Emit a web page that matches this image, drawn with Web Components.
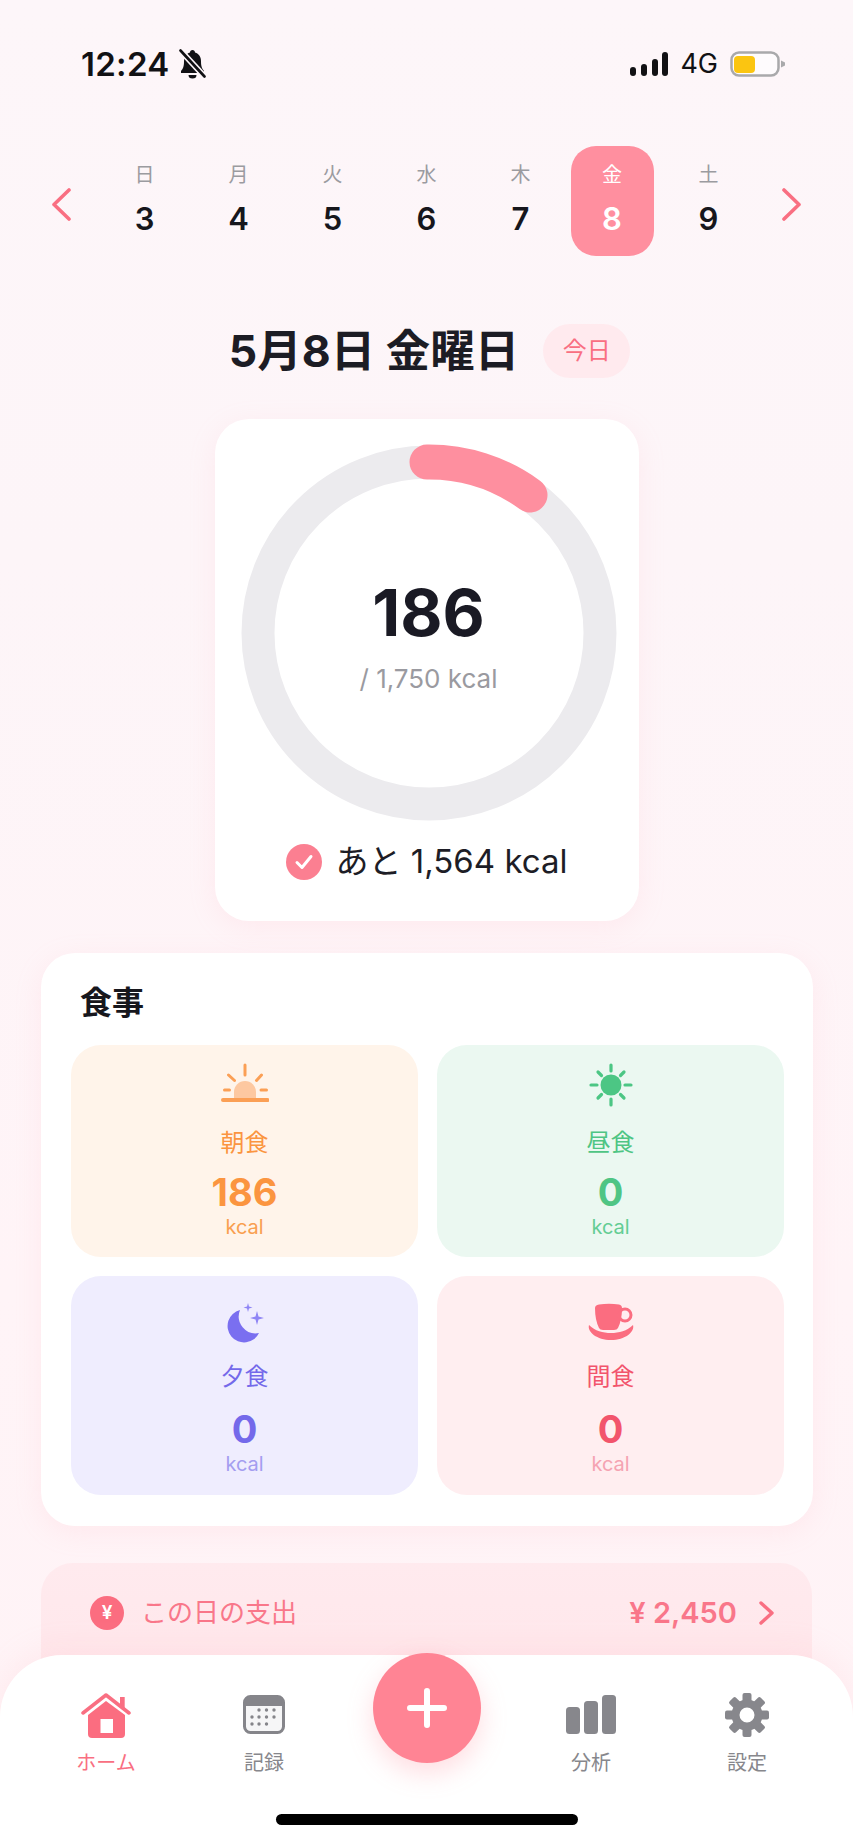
<!DOCTYPE html>
<html lang="ja">
<head>
<meta charset="utf-8">
<title>食事</title>
<style>
  html, body { margin: 0; padding: 0; }
  body { font-family: Inter, "Noto Sans CJK JP", sans-serif; background: #fdf5f8; }
</style>
</head>
<body>
<app-shell>
  <status-bar></status-bar>
  <week-strip>
    <day-cell label="日" num="3"></day-cell>
    <day-cell label="月" num="4"></day-cell>
    <day-cell label="火" num="5"></day-cell>
    <day-cell label="水" num="6"></day-cell>
    <day-cell label="木" num="7"></day-cell>
    <day-cell label="金" num="8" selected></day-cell>
    <day-cell label="土" num="9"></day-cell>
  </week-strip>
  <date-heading title="5月8日 金曜日" badge="今日"></date-heading>
  <calorie-ring value="186" goal="/ 1,750 kcal" rest="あと 1,564 kcal"></calorie-ring>
  <meal-panel heading="食事">
    <meal-tile kind="morning" label="朝食" value="186">
      <svg slot="icon" width="48" height="44" viewBox="0 0 48 44" fill="none" stroke="#fb9f55" stroke-width="3" stroke-linecap="round">
        <path d="M24 2v10M7.5 12l6 5.500M40.500 12l-5 5.500M3.500 27h5M40 27h5.500"/>
        <path d="M13 35v-6a11 11 0 0 1 22 0v6z" fill="#fdc8a0" stroke="none"/>
        <path d="M2 37h44.500" stroke-width="4"/>
      </svg>
    </meal-tile>
    <meal-tile kind="noon" label="昼食" value="0">
      <svg slot="icon" width="44" height="44" viewBox="0 0 44 44" fill="none" stroke="#4cc684" stroke-width="3.200" stroke-linecap="round">
        <circle cx="22" cy="22" r="10.500" fill="#4cc684" stroke="none"/>
        <path d="M22 2v6M22 36v6M2 22h6M36 22h6M9 9l3.500 3.500M35 9l-3.500 3.500M9 35l3.500-3.500M35 35l-3.500-3.500"/>
      </svg>
    </meal-tile>
    <meal-tile kind="night" label="夕食" value="0">
      <svg slot="icon" width="40" height="44" viewBox="0 0 40 44" fill="#7a6ff0">
        <path d="M15 10A16.500 16.500 0 1 0 34 33A17 17 0 0 1 15 10Z"/>
        <path fill="#8f85f5" d="M32 11l1.500 5.500L39 18l-5.500 1.500L32 25l-1.500-5.500L25 18l5.500-1.500zM23 3l1 3.500 3.500 1-3.500 1-1 3.500-1-3.500-3.500-1 3.500-1z"/>
      </svg>
    </meal-tile>
    <meal-tile kind="snack" label="間食" value="0">
      <svg slot="icon" width="48" height="40" viewBox="0 0 48 40" fill="#fb6d80">
        <path d="M8 6q0-3 4-3.500Q22 1 32 2.500 35 3 35 6q0 12-4 20-1 2-4 2H16q-3 0-4-2Q8 18 8 6z"/>
        <circle cx="38" cy="13" r="6" fill="none" stroke="#fb6d80" stroke-width="3"/>
        <path d="M2 23C8 29 16 31 24 31S40 29 46 23C48 30 38 38 24 38S0 30 2 23z"/>
      </svg>
    </meal-tile>
  </meal-panel>
  <spend-row label="この日の支出" amount="¥ 2,450"></spend-row>
  <tab-bar>
    <tab-item label="ホーム" active>
      <svg width="50" height="46" viewBox="0 0 50 46">
        <path d="M39 5h4.700v11H39z" fill="#f96f82"/>
        <path d="M7 23L25 9l19 14v19q0 4-4 4H11q-4 0-4-4z" fill="#fb6d80"/>
        <path d="M2 21L25 3l23 18" fill="none" stroke="#f96f82" stroke-width="3.500" stroke-linecap="round" stroke-linejoin="round"/>
        <path d="M19.500 27h12.500v14H19.500z" fill="#fff"/>
      </svg>
    </tab-item>
    <tab-item label="記録">
      <svg width="42" height="40" viewBox="0 0 42 40">
        <rect x="1.500" y="1.500" width="39" height="36" rx="6" fill="#f6f6f7" stroke="#85858a" stroke-width="3"/>
        <path d="M1.500 11V7.500q0-6 6-6h27q6 0 6 6V11z" fill="#85858a"/>
        <g fill="#85858a">
          <circle cx="16" cy="15" r="1.700"/><circle cx="23.500" cy="15" r="1.700"/><circle cx="31" cy="15" r="1.700"/>
          <circle cx="9" cy="22" r="1.700"/><circle cx="16" cy="22" r="1.700"/><circle cx="23.500" cy="22" r="1.700"/><circle cx="31" cy="22" r="1.700"/>
          <circle cx="9" cy="29" r="1.700"/><circle cx="16" cy="29" r="1.700"/><circle cx="23.500" cy="29" r="1.700"/>
        </g>
      </svg>
    </tab-item>
    <fab-button></fab-button>
    <tab-item label="分析">
      <svg width="50" height="40" viewBox="0 0 50 40" fill="#87878c">
        <rect x="0" y="12" width="14" height="27" rx="3.500"/>
        <rect x="18" y="6" width="14" height="33" rx="3.500"/>
        <rect x="36" y="0" width="14" height="39" rx="3.500"/>
      </svg>
    </tab-item>
    <tab-item label="設定">
      <svg width="46" height="46" viewBox="0 0 46 46" fill="#87878c">
        <g>
          <rect x="18.500" y="1" width="9" height="12" rx="2"/>
          <rect x="18.500" y="1" width="9" height="12" rx="2" transform="rotate(45 23 23)"/>
          <rect x="18.500" y="1" width="9" height="12" rx="2" transform="rotate(90 23 23)"/>
          <rect x="18.500" y="1" width="9" height="12" rx="2" transform="rotate(135 23 23)"/>
          <rect x="18.500" y="1" width="9" height="12" rx="2" transform="rotate(180 23 23)"/>
          <rect x="18.500" y="1" width="9" height="12" rx="2" transform="rotate(225 23 23)"/>
          <rect x="18.500" y="1" width="9" height="12" rx="2" transform="rotate(270 23 23)"/>
          <rect x="18.500" y="1" width="9" height="12" rx="2" transform="rotate(315 23 23)"/>
        </g>
        <circle cx="23" cy="23" r="11.500" fill="none" stroke="#87878c" stroke-width="8"/>
      </svg>
    </tab-item>
  </tab-bar>
</app-shell>

<script>
class AppShell extends HTMLElement {
  constructor() {
    super();
    this.attachShadow({ mode: "open" });
  }
  connectedCallback() {
    this.shadowRoot.innerHTML = `
    <style>
      :host {
        display: flex;
        flex-direction: column;
        position: relative;
        width: 853px;
        height: 1844px;
        overflow: hidden;
        font-family: Inter, "Noto Sans CJK JP", sans-serif;
        background: linear-gradient(180deg, #fdf6f9 0%, #fdf5f8 30%, #fff4f7 70%, #fff3f6 100%);
      }
    </style>
    <slot></slot>`;
  }
}

class StatusBar extends HTMLElement {
  constructor() {
    super();
    this.attachShadow({ mode: "open" });
  }
  connectedCallback() {
    this.shadowRoot.innerHTML = `
    <style>
      :host {
        display: flex;
        justify-content: space-between;
        align-items: center;
        height: 30px;
        margin-top: 49px;
        padding: 0 68px 0 81px;
        color: #111114;
      }
      .left, .right { display: flex; align-items: center; }
      .time { font-size: 33px; font-weight: 600; line-height: 30px; letter-spacing: .3px; }
      .bell { margin-left: 9px; }
      .net { font-size: 27px; font-weight: 400; line-height: 30px; margin: 0 12px; }
    </style>
    <div class="left">
      <span class="time">12:24</span>
      <svg class="bell" width="27" height="30" viewBox="0 0 27 30">
        <path d="M13.500 1c1.500 0 2.500 1 2.500 2.500 4 1.200 6 4.500 6 9 0 5 1 7 3 9.500v2H2v-2c2-2.500 3-4.500 3-9.500 0-4.500 2-7.800 6-9C11 2 12 1 13.500 1z" fill="#111114"/>
        <path d="M9.500 26h8a4 3.500 0 0 1-8 0z" fill="#111114"/>
        <path d="M1 1l25 27" stroke="#fdf6f9" stroke-width="6"/>
        <path d="M1.500 1.500l24 26" stroke="#111114" stroke-width="2.600" stroke-linecap="round"/>
      </svg>
    </div>
    <div class="right">
      <svg width="38" height="25" viewBox="0 0 38 25" fill="#111114">
        <rect x="0" y="15" width="6" height="9" rx="3"/>
        <rect x="11" y="12" width="6" height="12" rx="3"/>
        <rect x="22" y="7" width="6" height="17" rx="3"/>
        <rect x="32" y="0" width="6" height="24" rx="3"/>
      </svg>
      <span class="net">4G</span>
      <svg width="55" height="26" viewBox="0 0 55 26">
        <rect x="1.500" y="1.500" width="47" height="23" rx="7.500" fill="#fff" fill-opacity=".6" stroke="#a9a9ab" stroke-width="2.500"/>
        <rect x="4" y="5" width="21" height="17" rx="4" fill="#fbc511"/>
        <path d="M51 9.500l4 2v3l-4 2z" fill="#a9a9ab"/>
      </svg>
    </div>`;
  }
}

class WeekStrip extends HTMLElement {
  constructor() {
    super();
    this.attachShadow({ mode: "open" });
  }
  connectedCallback() {
    this.shadowRoot.innerHTML = `
    <style>
      :host {
        display: flex;
        align-items: center;
        height: 110px;
        margin-top: 67px;
        padding: 0 52px;
      }
      .days {
        display: grid;
        grid-template-columns: repeat(7, 94px);
        margin: 0 auto;
        flex: none;
      }
      svg { flex: none; margin-top: 7px; }
    </style>
    <svg width="19" height="33" viewBox="0 0 19 33" fill="none" stroke="#f96f82" stroke-width="3.600" stroke-linecap="round" stroke-linejoin="round"><path d="M17 2L2 16.500 17 31"/></svg>
    <div class="days"><slot></slot></div>
    <svg width="19" height="33" viewBox="0 0 19 33" fill="none" stroke="#f96f82" stroke-width="3.600" stroke-linecap="round" stroke-linejoin="round"><path d="M2 2l15 14.500L2 31"/></svg>`;
  }
}

class DayCell extends HTMLElement {
  constructor() {
    super();
    this.attachShadow({ mode: "open" });
  }
  connectedCallback() {
    this.shadowRoot.innerHTML = `
    <style>
      :host {
        display: flex;
        flex-direction: column;
        align-items: center;
        justify-self: center;
        width: 83px;
        height: 110px;
        padding-top: 17px;
        box-sizing: border-box;
        border-radius: 25px;
      }
      :host([selected]) {
        margin-right: 5px;
        background: #ff8f9f;
      }
      .label { font-size: 20px; line-height: 24px; color: #9b9ba0; }
      .num { font-size: 31px; font-weight: 600; line-height: 38px; margin-top: 13px; color: #16161c; }
      :host([selected]) .label, :host([selected]) .num { color: #fff; }
    </style>
    <span class="label">${this.getAttribute("label")}</span>
    <span class="num">${this.getAttribute("num")}</span>`;
  }
}

class DateHeading extends HTMLElement {
  constructor() {
    super();
    this.attachShadow({ mode: "open" });
  }
  connectedCallback() {
    this.shadowRoot.innerHTML = `
    <style>
      :host {
        display: flex;
        align-items: center;
        justify-content: center;
        gap: 24px;
        height: 54px;
        margin-top: 68px;
        padding-left: 6px;
      }
      h1 { margin: 0; font-size: 44.5px; font-weight: 700; line-height: 54px; color: #1c1c24; }
      .badge {
        width: 87px;
        height: 54px;
        border-radius: 27px;
        background: #ffeaee;
        color: #f96f82;
        font-size: 24px;
        line-height: 54px;
        text-align: center;
      }
    </style>
    <h1>${this.getAttribute("title")}</h1>
    <span class="badge">${this.getAttribute("badge")}</span>`;
  }
}

class CalorieRing extends HTMLElement {
  constructor() {
    super();
    this.attachShadow({ mode: "open" });
  }
  connectedCallback() {
    this.shadowRoot.innerHTML = `
    <style>
      :host {
        display: flex;
        flex-direction: column;
        align-items: center;
        box-sizing: border-box;
        width: 424px;
        height: 502px;
        margin: 41px 0 0 215px;
        padding-top: 25px;
        border-radius: 34px;
        background: #fff;
        box-shadow: 0 6px 28px rgba(255, 170, 185, .14);
      }
      .dial { display: grid; width: 376px; height: 378px; margin-left: 3px; }
      .dial > * { grid-area: 1 / 1; }
      .center {
        display: flex;
        flex-direction: column;
        align-items: center;
        justify-content: center;
        padding-top: 6px;
      }
      .value { font-size: 65px; font-weight: 700; line-height: 70px; color: #1a1a24; }
      .goal { font-size: 26px; line-height: 32px; margin-top: 15px; color: #9a9aa0; }
      .rest {
        display: flex;
        align-items: center;
        gap: 14px;
        margin-top: 21px;
        margin-left: -1px;
        font-size: 33px;
        line-height: 37px;
        color: #1d1d26;
      }
    </style>
    <div class="dial">
      <svg width="376" height="378" viewBox="0 0 376 378" fill="none">
        <circle cx="188" cy="189" r="171" stroke="#ecebee" stroke-width="33"/>
        <path d="M186 18A171 171 0 0 1 289 51" stroke="#fe8f9f" stroke-width="35" stroke-linecap="round"/>
      </svg>
      <div class="center">
        <span class="value">${this.getAttribute("value")}</span>
        <span class="goal">${this.getAttribute("goal")}</span>
      </div>
    </div>
    <div class="rest">
      <svg width="36" height="36" viewBox="0 0 36 36"><circle cx="18" cy="18" r="18" fill="#fb7f91"/><path d="M11 18.500l5 5 9-11" fill="none" stroke="#fff" stroke-width="3" stroke-linecap="round" stroke-linejoin="round"/></svg>
      <span>${this.getAttribute("rest")}</span>
    </div>`;
  }
}

class MealPanel extends HTMLElement {
  constructor() {
    super();
    this.attachShadow({ mode: "open" });
  }
  connectedCallback() {
    this.shadowRoot.innerHTML = `
    <style>
      :host {
        display: block;
        box-sizing: border-box;
        width: 772px;
        height: 573px;
        margin: 32px 0 0 41px;
        padding: 28px 29px 0 30px;
        border-radius: 34px;
        background: #fff;
        box-shadow: 0 6px 28px rgba(255, 170, 185, .14);
      }
      h2 { margin: 0 0 0 9px; font-size: 32px; font-weight: 600; line-height: 44px; color: #17171d; }
      .grid {
        display: grid;
        grid-template-columns: 347px 347px;
        grid-template-rows: 212px 219px;
        gap: 19px;
        margin-top: 20px;
      }
    </style>
    <h2>${this.getAttribute("heading")}</h2>
    <div class="grid"><slot></slot></div>`;
  }
}

class MealTile extends HTMLElement {
  constructor() {
    super();
    this.attachShadow({ mode: "open" });
  }
  connectedCallback() {
    this.shadowRoot.innerHTML = `
    <style>
      :host {
        display: flex;
        flex-direction: column;
        align-items: center;
        justify-content: center;
        box-sizing: border-box;
        border-radius: 30px;
        --label-gap: 17px;
        --value-gap: 14px;
      }
      :host([kind="morning"]) { background: #fff4ea; --main: #fb9540; --soft: #f99f50; --label-gap: 20px; --value-gap: 11px; }
      :host([kind="noon"]) { background: #ebf8f1; --main: #4fc584; --soft: #63cd94; --label-gap: 20px; --value-gap: 11px; }
      :host([kind="night"]) { background: #efedfe; --main: #7469ea; --soft: #a49df0; padding-top: 4px; }
      :host([kind="snack"]) { background: #ffeef0; --main: #f2546c; --soft: #f5a3b2; padding-top: 4px; }
      .icon { display: flex; align-items: center; justify-content: center; height: 44px; }
      .label { font-size: 24px; line-height: 32px; margin-top: var(--label-gap); color: var(--main); }
      .value { font-size: 38px; font-weight: 700; line-height: 44px; margin-top: var(--value-gap); color: var(--main); }
      .unit { font-size: 20px; line-height: 24px; margin-top: 1px; color: var(--soft); }
    </style>
    <div class="icon"><slot name="icon"></slot></div>
    <span class="label">${this.getAttribute("label")}</span>
    <span class="value">${this.getAttribute("value")}</span>
    <span class="unit">kcal</span>`;
  }
}

class SpendRow extends HTMLElement {
  constructor() {
    super();
    this.attachShadow({ mode: "open" });
  }
  connectedCallback() {
    this.shadowRoot.innerHTML = `
    <style>
      :host {
        display: flex;
        align-items: flex-start;
        box-sizing: border-box;
        width: 771px;
        height: 150px;
        margin: 37px 0 0 41px;
        padding: 33px 38px 0 49px;
        border-radius: 32px;
        background: linear-gradient(180deg, #ffeaee 0%, #ffe6ea 100%);
        color: #f9778a;
      }
      .yen {
        width: 34px;
        height: 34px;
        border-radius: 50%;
        background: #fb6d80;
        color: #fff;
        font-size: 19px;
        font-weight: 600;
        line-height: 34px;
        text-align: center;
      }
      .label { font-size: 26px; line-height: 34px; margin-left: 17px; }
      .amount { font-size: 29px; font-weight: 600; line-height: 34px; margin-left: auto; }
      svg { margin: 5px 0 0 22px; }
    </style>
    <span class="yen">¥</span>
    <span class="label">${this.getAttribute("label")}</span>
    <span class="amount">${this.getAttribute("amount")}</span>
    <svg width="15" height="24" viewBox="0 0 15 24" fill="none" stroke="#f96f82" stroke-width="3.400" stroke-linecap="round" stroke-linejoin="round"><path d="M2 2l11 10L2 22"/></svg>`;
  }
}

class TabBar extends HTMLElement {
  constructor() {
    super();
    this.attachShadow({ mode: "open" });
  }
  connectedCallback() {
    this.shadowRoot.innerHTML = `
    <style>
      :host {
        display: block;
        position: absolute;
        left: 0;
        right: 0;
        bottom: 0;
        box-sizing: border-box;
        height: 189px;
        padding-top: 37px;
        border-radius: 62px 62px 0 0;
        background: #fff;
        box-shadow: 0 -8px 30px rgba(255, 170, 185, .12);
      }
      .row {
        display: grid;
        grid-template-columns: 158px 158px 168px 160px 152px;
        height: 87px;
        padding-left: 27px;
      }
      .home {
        width: 302px;
        height: 11px;
        margin: 35px 0 0 276px;
        border-radius: 6px;
        background: #000;
      }
    </style>
    <div class="row"><slot></slot></div>
    <div class="home"></div>`;
  }
}

class TabItem extends HTMLElement {
  constructor() {
    super();
    this.attachShadow({ mode: "open" });
  }
  connectedCallback() {
    this.shadowRoot.innerHTML = `
    <style>
      :host {
        display: flex;
        flex-direction: column;
        align-items: center;
        color: #87878c;
      }
      :host([active]) { color: #f96f82; }
      .icon { display: flex; align-items: center; justify-content: center; height: 46px; }
      .label { font-size: 20px; line-height: 28px; margin-top: 11px; }
    </style>
    <div class="icon"><slot></slot></div>
    <span class="label">${this.getAttribute("label")}</span>`;
  }
}

class FabButton extends HTMLElement {
  constructor() {
    super();
    this.attachShadow({ mode: "open" });
  }
  connectedCallback() {
    this.shadowRoot.innerHTML = `
    <style>
      :host {
        display: flex;
        align-items: center;
        justify-content: center;
        justify-self: center;
        width: 108px;
        height: 110px;
        margin-top: -39px;
        border-radius: 50%;
        background: #ff8494;
        box-shadow: 0 10px 26px rgba(255, 132, 148, .28);
      }
    </style>
    <svg width="40" height="40" viewBox="0 0 40 40" fill="none" stroke="#fff" stroke-width="6" stroke-linecap="round"><path d="M20 3v34M3 20h34"/></svg>`;
  }
}

customElements.define("app-shell", AppShell);
customElements.define("status-bar", StatusBar);
customElements.define("week-strip", WeekStrip);
customElements.define("day-cell", DayCell);
customElements.define("date-heading", DateHeading);
customElements.define("calorie-ring", CalorieRing);
customElements.define("meal-panel", MealPanel);
customElements.define("meal-tile", MealTile);
customElements.define("spend-row", SpendRow);
customElements.define("tab-bar", TabBar);
customElements.define("tab-item", TabItem);
customElements.define("fab-button", FabButton);
</script>
</body>
</html>
